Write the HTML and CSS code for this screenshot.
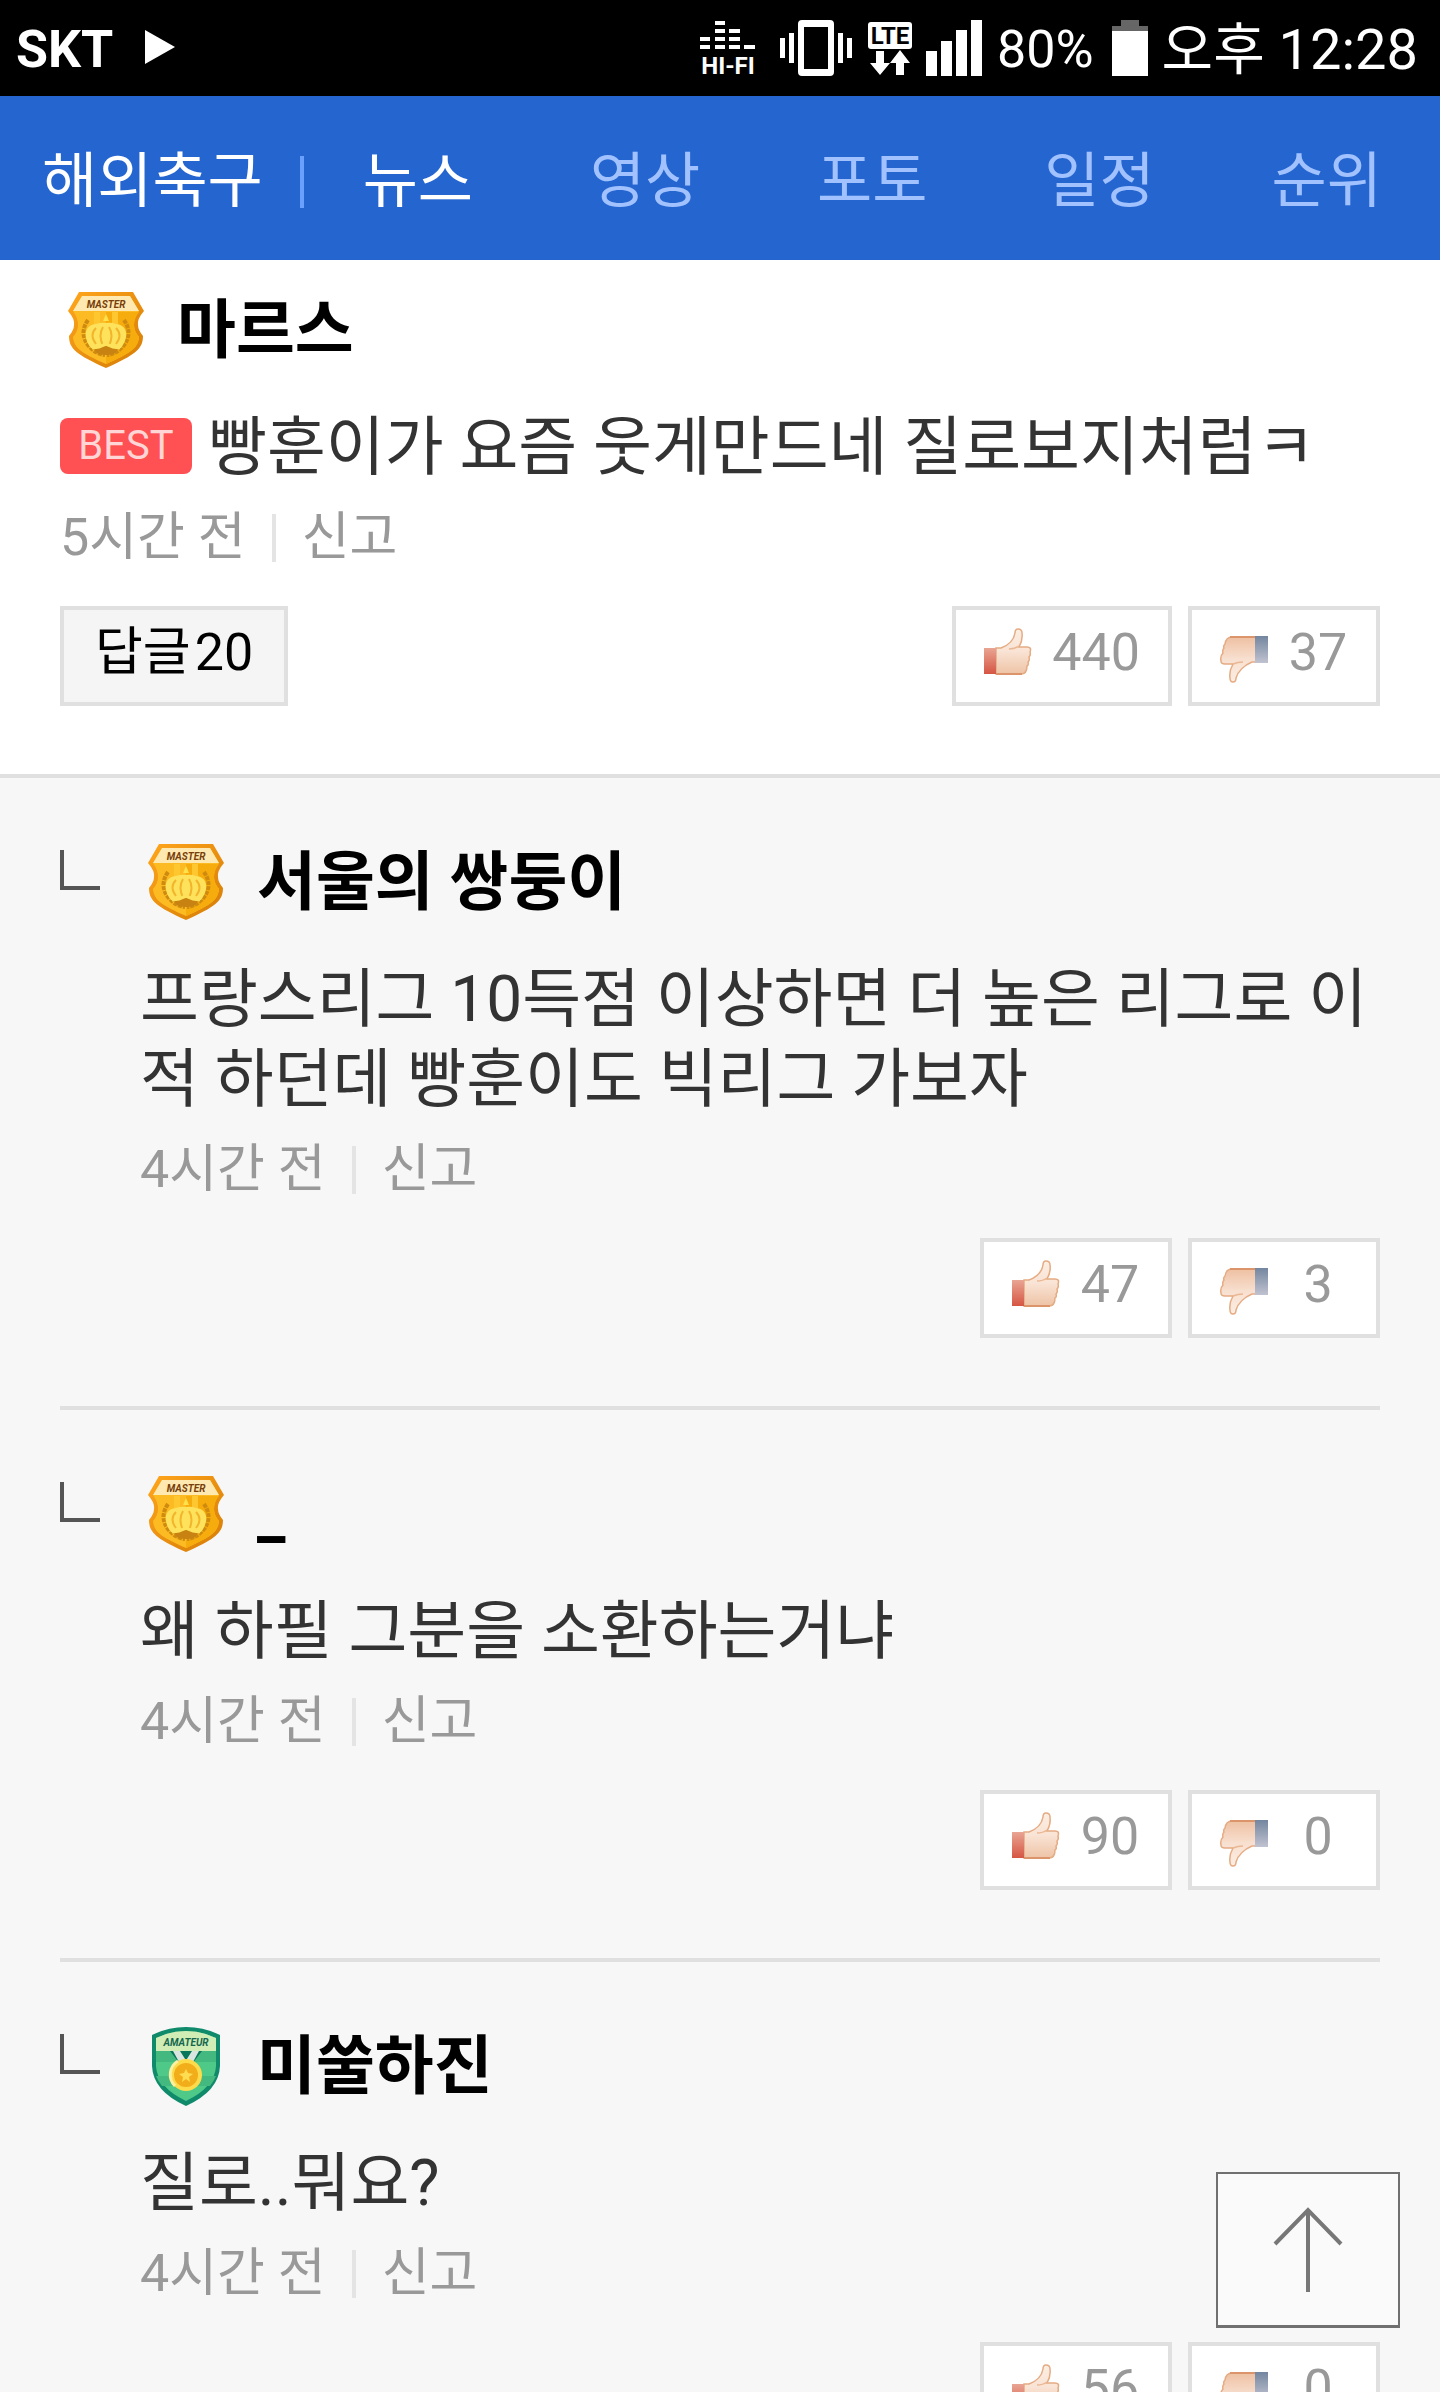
FILE: index.html
```html
<!DOCTYPE html>
<html lang="ko">
<head>
  <meta charset="UTF-8">
  <meta name="viewport" content="width=device-width, initial-scale=1.0">
  <title>해외축구</title>
  <link rel="stylesheet" href="styles.css">
</head>
<body>

  <!-- shared icons -->
  <svg class="defs" width="0" height="0" aria-hidden="true">
    <defs>
      <linearGradient id="gold" x1="0" y1="0" x2="1" y2="1">
        <stop offset="0" stop-color="#ffa51c"/>
        <stop offset="1" stop-color="#d57c06"/>
      </linearGradient>
      <linearGradient id="skin" x1="0" y1="0" x2="0" y2="1">
        <stop offset="0" stop-color="#fbeee3"/>
        <stop offset="0.5" stop-color="#f9e3d4"/>
        <stop offset="1" stop-color="#eec3a5"/>
      </linearGradient>
      <linearGradient id="skin-down" x1="0" y1="0" x2="0" y2="1">
        <stop offset="0" stop-color="#eec0a2"/>
        <stop offset="0.5" stop-color="#f8e0d0"/>
        <stop offset="1" stop-color="#fbeee3"/>
      </linearGradient>
      <linearGradient id="red" x1="0" y1="0" x2="0" y2="1">
        <stop offset="0" stop-color="#e9a593"/>
        <stop offset="1" stop-color="#d65543"/>
      </linearGradient>
      <linearGradient id="blue" x1="0" y1="0" x2="0" y2="1">
        <stop offset="0" stop-color="#73869f"/>
        <stop offset="1" stop-color="#c0c2d0"/>
      </linearGradient>
    </defs>
    <symbol id="master" viewBox="0 0 76 80">
      <path d="M11 2H65L76 21Q69 29 70 35Q70 40 75 46C75 59 67 65 38 78C9 65 1 59 1 46Q6 40 6 35Q7 29 0 21Z" fill="url(#gold)"/>
      <path d="M14 6H62L71 21Q66 28 66 35Q66 41 71 47C70 58 63 63 38 74C13 63 6 58 5 47Q10 41 10 35Q10 28 5 21Z" fill="#fcbb22"/>
      <path d="M38 22H71Q66 28 66 35Q66 41 71 47C70 58 63 63 38 74Z" fill="#f6ac0d"/>
      <path d="M26 22h6v40h-6zM44 22h6v40h-6z" fill="#ffc72f"/>
      <path d="M14 6H62L71 21H5Z" fill="#ffe9b0"/>
      <path d="M20 30Q11 43 20 55Q27 64 37 65M56 30Q65 43 56 55Q49 64 39 65" fill="none" stroke="#cf8a10" stroke-width="4" stroke-dasharray="4 1"/>
      <path d="M38 24l3 7h-6z" fill="#ffe04d"/>
      <path d="M23 58C14 46 17 35 28 34Q34 32 38 33Q42 32 48 34C59 35 62 46 53 58Q38 62 23 58Z" fill="#ffe25c"/>
      <path d="M28 54Q21 45 28 38M35 56Q30 45 35 37M41 56Q46 45 41 37M48 54Q55 45 48 38" fill="none" stroke="#f2b52c" stroke-width="2"/>
      <path d="M25 58Q38 54 51 58L46 64Q38 66 30 64Z" fill="#c78212"/>
      <path d="M24 58l7-1 7-3 7 3 7 1" fill="none" stroke="#ffe25c" stroke-width="3"/>
    </symbol>
    <symbol id="amateur" viewBox="0 0 76 80">
      <path d="M4 9Q20 1 38 1Q56 1 72 9V40Q71 65 38 80Q5 65 4 40Z" fill="#0f8a6b"/>
      <path d="M8 12Q22 5 38 5Q54 5 68 12V40Q67 61 38 75Q9 61 8 40Z" fill="#4fc988"/>
      <path d="M8 12Q22 5 38 5Q54 5 68 12V25H8Z" fill="#cfedb5"/>
      <path d="M8 25h60v11H8zM8 50h60q-2 5-6 10H14q-4-5-6-10z" fill="#43b87f"/>
      <path d="M22 25h32L44 38H32Z" fill="#087659"/>
      <path d="M25 25h7l7 11h-8zM51 25h-7l-7 11h8z" fill="#d9e5df"/>
      <circle cx="38" cy="49" r="16" fill="#fddb4a"/>
      <path d="M27 60A16 16 0 0 1 30 35" fill="none" stroke="#fff0a0" stroke-width="3"/>
      <circle cx="38" cy="49" r="12" fill="#f2ad1a"/>
      <path d="M38 43l2 4 5 1-4 3 1 5-4-3-4 3 1-5-4-3 5-1z" fill="#ffdc50"/>
    </symbol>
    <symbol id="up" viewBox="0 0 48 56">
      <path d="M12 20H17C25 17 30 11 31 5Q31 1 34 1Q38 1 38 5Q39 12 35 19H43Q48 19 46 24Q47 27 45 29Q46 32 44 34Q45 37 43 38Q43 46 37 46H12Z" fill="url(#skin)" stroke="#e5ab83" stroke-width="1.5"/>
      <path d="M25 21Q31 21 35 18" fill="none" stroke="#eab793" stroke-width="1.5"/>
      <path d="M12 46H38" stroke="#dc956b" stroke-width="2"/>
      <path d="M0 20h12v26H0z" fill="url(#red)"/>
    </symbol>
    <symbol id="down" viewBox="0 0 48 56">
      <path d="M36 9H12Q6 9 5 16Q3 18 4 20Q2 22 3 25Q0 28 1 33Q1 36 5 36H13Q9 43 10 50Q10 54 13 54Q16 54 16 50C18 43 25 37 32 34H36Z" fill="url(#skin-down)" stroke="#e5ab83" stroke-width="1.5"/>
      <path d="M10 9H36" stroke="#dc956b" stroke-width="2"/>
      <path d="M13 36Q18 34 23 34" fill="none" stroke="#eab793" stroke-width="1.5"/>
      <path d="M35 8h13v27H35z" fill="url(#blue)"/>
    </symbol>
  </svg>

  <div class="status">
    <div class="carrier">
      <span>SKT</span>
      <svg width="30" height="36" viewBox="0 0 30 36"><path d="M0 0L30 17L0 34Z" fill="#fff"/></svg>
    </div>
    <div class="indicators">
      <svg width="56" height="56" viewBox="0 0 56 56" fill="#fff">
        <path d="M15 1h10v4H15zM15 9h10v4H15zM29 9h11v4H29zM0 17h10v4H0zM15 17h10v4H15zM29 17h11v4H29zM0 25h10v4H0zM15 25h10v4H15zM29 25h11v4H29zM44 25h11v4H44z"/>
        <text x="28" y="54" text-anchor="middle" class="hifi">HI-FI</text>
      </svg>
      <svg width="72" height="56" viewBox="0 0 72 56" fill="#fff">
        <path d="M0 18h5v20H0zM9 13h5v30H9zM58 13h5v30h-5zM67 18h5v20h-5z"/>
        <path fill-rule="evenodd" d="M22 0H50Q54 0 54 4V52Q54 56 50 56H22Q18 56 18 52V4Q18 0 22 0ZM24 7V49H48V7Z"/>
      </svg>
      <svg width="44" height="56" viewBox="0 0 44 56" fill="#fff">
        <rect x="0" y="2" width="44" height="27" rx="3"/>
        <text x="22" y="24" text-anchor="middle" class="lte">LTE</text>
        <path d="M8 31h8v12h6L12 55L2 43h6zM28 55h8V43h6L32 30L22 43h6z"/>
      </svg>
      <svg width="57" height="56" viewBox="0 0 57 56" fill="#fff">
        <path d="M0 31h11v25H0zM15 21h11v35H15zM30 10h11v46H30zM45 0h11v56H45z"/>
      </svg>
      <span class="percent">80%</span>
      <svg width="36" height="56" viewBox="0 0 36 56">
        <path d="M9 0h18v6h9v6H0V6h9z" fill="#666"/>
        <path d="M0 11h36v45H0z" fill="#fff"/>
      </svg>
      <span class="clock">오후 12:28</span>
    </div>
  </div>

  <header class="header">
    <a class="title" href="#">해외축구</a>
    <nav class="menu">
      <a class="on" href="#">뉴스</a>
      <a href="#">영상</a>
      <a href="#">포토</a>
      <a href="#">일정</a>
      <a href="#">순위</a>
    </nav>
  </header>

  <main>
    <article class="comment">
      <div class="user">
        <svg class="badge master"><use href="#master"/><text x="38" y="18">MASTER</text></svg>
        <strong>마르스</strong>
      </div>
      <p class="text"><span class="best">BEST</span>빵훈이가 요즘 웃게만드네 질로보지처럼ㅋ</p>
      <div class="meta"><span>5시간 전</span><a href="#">신고</a></div>
      <div class="actions">
        <button class="btn reply-btn">답글<b>20</b></button>
        <div class="votes">
          <button class="btn"><svg class="thumb"><use href="#up"/></svg><span>440</span></button>
          <button class="btn"><svg class="thumb"><use href="#down"/></svg><span>37</span></button>
        </div>
      </div>
    </article>

    <section class="replies">
      <article class="comment reply">
        <div class="user">
          <i class="corner"></i>
          <svg class="badge master"><use href="#master"/><text x="38" y="18">MASTER</text></svg>
          <strong>서울의 쌍둥이</strong>
        </div>
        <p class="text">프랑스리그 10득점 이상하면 더 높은 리그로 이적 하던데 빵훈이도 빅리그 가보자</p>
        <div class="meta"><span>4시간 전</span><a href="#">신고</a></div>
        <div class="actions">
          <div class="votes">
            <button class="btn"><svg class="thumb"><use href="#up"/></svg><span>47</span></button>
            <button class="btn"><svg class="thumb"><use href="#down"/></svg><span>3</span></button>
          </div>
        </div>
      </article>

      <article class="comment reply">
        <div class="user">
          <i class="corner"></i>
          <svg class="badge master"><use href="#master"/><text x="38" y="18">MASTER</text></svg>
          <strong>_</strong>
        </div>
        <p class="text">왜 하필 그분을 소환하는거냐</p>
        <div class="meta"><span>4시간 전</span><a href="#">신고</a></div>
        <div class="actions">
          <div class="votes">
            <button class="btn"><svg class="thumb"><use href="#up"/></svg><span>90</span></button>
            <button class="btn"><svg class="thumb"><use href="#down"/></svg><span>0</span></button>
          </div>
        </div>
      </article>

      <article class="comment reply">
        <div class="user">
          <i class="corner"></i>
          <svg class="badge amateur"><use href="#amateur"/><text x="38" y="20">AMATEUR</text></svg>
          <strong>미쑬하진</strong>
        </div>
        <p class="text">질로..뭐요?</p>
        <div class="meta"><span>4시간 전</span><a href="#">신고</a></div>
        <div class="actions">
          <div class="votes">
            <button class="btn"><svg class="thumb"><use href="#up"/></svg><span>56</span></button>
            <button class="btn"><svg class="thumb"><use href="#down"/></svg><span>0</span></button>
          </div>
        </div>
      </article>
    </section>
  </main>

  <button class="top-btn" aria-label="맨 위로">
    <svg width="72" height="88" viewBox="0 0 72 88" fill="none" stroke="#777" stroke-width="4">
      <path d="M36 86V4M3 38L36 4L69 38"/>
    </svg>
  </button>

</body>
</html>
```
FILE: styles.css
```css
* {
  box-sizing: border-box;
}

body {
  margin: 0;
  height: 100vh;
  overflow: hidden;
  background: #fff;
  color: #333;
  font-family: Roboto, "Noto Sans CJK KR", sans-serif;
}

a {
  color: inherit;
  text-decoration: none;
}

svg {
  display: block;
  flex: none;
  overflow: visible;
}

.defs {
  position: absolute;
}

/* phone status bar */
.status {
  display: flex;
  justify-content: space-between;
  align-items: center;
  height: 96px;
  padding: 0 22px 0 16px;
  background: #000;
  color: #fff;
  font-size: 52px;
  line-height: 88px;
}

.status span {
  padding-top: 4px;
}

.carrier {
  display: flex;
  align-items: center;
  gap: 32px;
  font-weight: bold;
}

.indicators {
  display: flex;
  align-items: center;
}

.indicators svg {
  margin-right: 14px;
}

.indicators svg:first-child {
  margin-right: 24px;
}

.indicators svg:nth-child(2) {
  margin-right: 16px;
}

.percent {
  margin-right: 18px;
}

.clock {
  font-size: 56px;
}

.hifi,
.lte {
  font-size: 24px;
  font-weight: bold;
}

.lte {
  fill: #000;
}

/* blue menu */
.header {
  display: flex;
  align-items: center;
  height: 164px;
  padding: 8px 58px 0 42px;
  background: #2565d0;
  color: #fff;
  font-size: 60px;
  line-height: 80px;
}

.title {
  margin-right: 37px;
}

.menu {
  flex: 1;
  display: flex;
  justify-content: space-between;
  align-items: center;
  color: #a1c2ff;
}

.menu:before {
  content: "";
  width: 4px;
  height: 52px;
  margin-right: -58px;
  background: #6ba0ff;
}

.menu .on {
  color: #fff;
}

/* comments */
.comment {
  padding: 26px 60px 68px;
  border-bottom: 4px solid #e0e0e0;
}

.user {
  display: flex;
  align-items: center;
  height: 88px;
  color: #000;
  font-size: 64px;
  line-height: 88px;
}

.user strong {
  padding-top: 2px;
}

.badge {
  width: 76px;
  height: 80px;
  margin: 0 33px 0 8px;
}

.badge text {
  font-size: 10px;
  font-weight: bold;
  font-style: italic;
  line-height: 12px;
  text-anchor: middle;
}

.master text {
  fill: #77400b;
}

.amateur text {
  fill: #15664f;
}

.text {
  margin: 34px 0 0;
  font-size: 64px;
  line-height: 80px;
  word-break: break-all;
}

.best {
  display: inline-block;
  height: 56px;
  width: 132px;
  margin: 0 16px 12px 0;
  border-radius: 8px;
  background: #ff5053;
  color: #ffd5d6;
  font-size: 40px;
  line-height: 56px;
  text-align: center;
  vertical-align: middle;
}

.meta {
  display: flex;
  align-items: center;
  height: 80px;
  margin-top: 10px;
  color: #999;
  font-size: 52px;
  line-height: 80px;
}

.meta a {
  display: flex;
  align-items: center;
}

.meta a:before {
  content: "";
  width: 4px;
  height: 48px;
  margin: 0 26px;
  background: #e4e4e4;
}

.actions {
  display: flex;
  margin-top: 28px;
}

.votes {
  display: flex;
  gap: 16px;
  margin-left: auto;
}

.btn {
  display: flex;
  align-items: center;
  gap: 20px;
  height: 100px;
  padding: 0 28px;
  border: 4px solid #e0e0e0;
  background: #fff;
  color: #999;
  font-family: inherit;
  font-size: 52px;
  line-height: 80px;
}

.btn span {
  min-width: 60px;
  padding-bottom: 6px;
  text-align: center;
}

.reply-btn {
  gap: 4px;
  padding: 0 31px 6px;
  background: #f5f5f5;
  color: #000;
}

.reply-btn b {
  font-weight: normal;
}

.thumb {
  width: 48px;
  height: 56px;
}

.replies {
  padding: 0 60px;
  background: #f7f7f7;
}

.reply {
  padding: 60px 0 68px 80px;
}

.reply .corner {
  width: 40px;
  height: 40px;
  margin: 0 0 24px -80px;
  border-left: 4px solid #555;
  border-bottom: 4px solid #555;
}

.reply .badge {
  margin-left: 48px;
}

.top-btn {
  position: fixed;
  right: 40px;
  bottom: 64px;
  display: flex;
  justify-content: center;
  align-items: center;
  width: 184px;
  height: 156px;
  padding: 0;
  border: 2px solid #707070;
  border-bottom-width: 3px;
  background: #fafafa;
}
```
